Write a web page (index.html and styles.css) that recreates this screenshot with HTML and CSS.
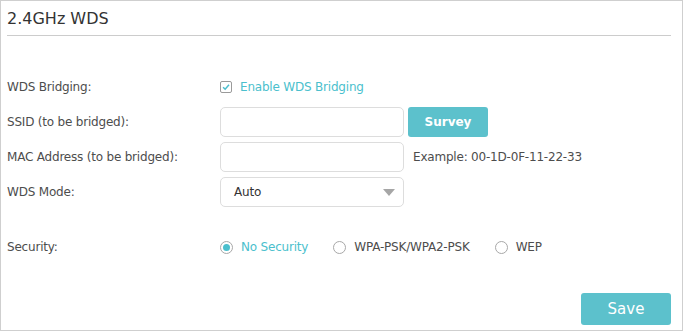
FILE: index.html
```html
<!DOCTYPE html>
<html lang="en">
<head>
    <meta charset="UTF-8">
    <title>2.4GHz WDS</title>
    <link rel="stylesheet" href="styles.css">
</head>
<body>

<div class="panel">
    <h2 class="title">2.4GHz WDS</h2>

    <div class="form">
        <div class="row row-check">
            <label class="label">WDS Bridging:</label>
            <div class="field">
                <span class="checkbox">
                    <svg width="12" height="12" viewBox="0 0 12 12"><path d="M2.5 6.2 L5 8.6 L9.6 3.4" fill="none" stroke="#4bbfcd" stroke-width="1.8"/></svg>
                </span>
                <span class="check-text">Enable WDS Bridging</span>
            </div>
        </div>

        <div class="row">
            <label class="label">SSID (to be bridged):</label>
            <div class="field">
                <input class="text-input" type="text">
                <button class="btn btn-survey">Survey</button>
            </div>
        </div>

        <div class="row">
            <label class="label">MAC Address (to be bridged):</label>
            <div class="field">
                <input class="text-input" type="text">
                <span class="hint">Example: 00-1D-0F-11-22-33</span>
            </div>
        </div>

        <div class="row">
            <label class="label">WDS Mode:</label>
            <div class="field">
                <div class="select">
                    <span>Auto</span>
                    <span class="caret"></span>
                </div>
            </div>
        </div>

        <div class="row row-security">
            <label class="label">Security:</label>
            <div class="field radios">
                <span class="radio checked"><span class="dot"></span></span>
                <span class="radio-text active">No Security</span>
                <span class="radio"></span>
                <span class="radio-text">WPA-PSK/WPA2-PSK</span>
                <span class="radio"></span>
                <span class="radio-text">WEP</span>
            </div>
        </div>
    </div>

    <div class="actions">
        <button class="btn btn-save">Save</button>
    </div>
</div>

</body>
</html>
```

FILE: styles.css
```css
body {
    margin: 0;
    font-family: Tahoma, "DejaVu Sans", sans-serif;
    color: #4d4d4d;
    background: #ffffff;
    letter-spacing: -0.2px;
}
.panel {
    box-sizing: border-box;
    width: 683px;
    height: 331px;
    border: 1px solid #cfcfcf;
    padding: 0 11px 0 6px;
}
.title {
    margin: 0;
    padding: 8px 0 0 0;
    height: 26px;
    font-size: 16px;
    font-weight: normal;
    color: #333333;
    border-bottom: 1px solid #cccccc;
    letter-spacing: 0;
}
.form {
    padding-top: 37px;
}
.row {
    display: flex;
    align-items: center;
    height: 30px;
    margin-bottom: 5px;
}
.row-check {
    height: 28px;
    margin-bottom: 6px;
}
.row-security {
    margin-top: 25px;
}
.label {
    width: 213px;
    flex: none;
    font-size: 12px;
    color: #4d4d4d;
}
.field {
    display: flex;
    align-items: center;
}
.checkbox {
    display: inline-flex;
    box-sizing: border-box;
    width: 12px;
    height: 12px;
    border: 1px solid #9a9a9a;
    border-radius: 2px;
    align-items: center;
    justify-content: center;
}
.checkbox svg { display: block; }
.check-text {
    margin-left: 8px;
    font-size: 12px;
    color: #4bbfcd;
}
.text-input {
    box-sizing: border-box;
    width: 184px;
    height: 30px;
    border: 1px solid #dddddd;
    border-radius: 5px;
    margin: 0;
    outline: none;
}
.btn {
    border: none;
    border-radius: 3px;
    background: #5cc1cc;
    color: #ffffff;
    font-family: Tahoma, "DejaVu Sans", sans-serif;
    font-weight: bold;
    cursor: pointer;
}
.btn-survey {
    width: 80px;
    height: 30px;
    margin-left: 4px;
    font-size: 12px;
}
.hint {
    margin-left: 9px;
    font-size: 12px;
}
.select {
    box-sizing: border-box;
    width: 184px;
    height: 30px;
    border: 1px solid #dddddd;
    border-radius: 5px;
    display: flex;
    align-items: center;
    justify-content: space-between;
    padding: 0 8px 0 13px;
    font-size: 12px;
    color: #333333;
}
.caret {
    width: 0;
    height: 0;
    border-left: 6px solid transparent;
    border-right: 6px solid transparent;
    border-top: 7px solid #a6a6a6;
}
.radios { font-size: 12px; }
.radio {
    box-sizing: border-box;
    width: 13px;
    height: 13px;
    border: 1px solid #a8a8a8;
    border-radius: 50%;
    display: inline-flex;
    align-items: center;
    justify-content: center;
}
.radio .dot {
    width: 7px;
    height: 7px;
    border-radius: 50%;
    background: #4bbfcd;
}
.radio-text {
    margin-left: 8px;
    margin-right: 25px;
}
.radio-text.active { color: #4bbfcd; }
.actions {
    display: flex;
    justify-content: flex-end;
    margin-top: 31px;
}
.btn-save {
    width: 90px;
    height: 32px;
    font-size: 15px;
    font-weight: normal;
}
```
